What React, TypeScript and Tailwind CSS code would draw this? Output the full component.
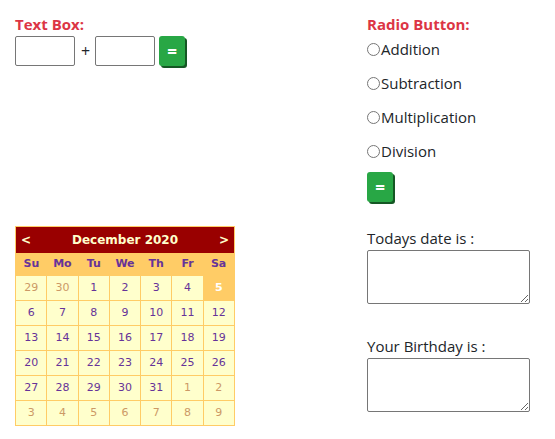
import React from 'react';

const weeks: { d: number; other?: boolean; today?: boolean }[][] = [
  [{ d: 29, other: true }, { d: 30, other: true }, { d: 1 }, { d: 2 }, { d: 3 }, { d: 4 }, { d: 5, today: true }],
  [{ d: 6 }, { d: 7 }, { d: 8 }, { d: 9 }, { d: 10 }, { d: 11 }, { d: 12 }],
  [{ d: 13 }, { d: 14 }, { d: 15 }, { d: 16 }, { d: 17 }, { d: 18 }, { d: 19 }],
  [{ d: 20 }, { d: 21 }, { d: 22 }, { d: 23 }, { d: 24 }, { d: 25 }, { d: 26 }],
  [{ d: 27 }, { d: 28 }, { d: 29 }, { d: 30 }, { d: 31 }, { d: 1, other: true }, { d: 2, other: true }],
  [3, 4, 5, 6, 7, 8, 9].map(d => ({ d, other: true })),
];

const dayNames = ['Su', 'Mo', 'Tu', 'We', 'Th', 'Fr', 'Sa'];

function EqualsButton() {
  return (
    <button className="w-[26px] h-[30px] rounded-[3px] bg-[#28a745] text-white font-bold text-[17px] leading-none shadow-[2px_2px_0_#155724] flex items-center justify-center">
      =
    </button>
  );
}

function Calendar() {
  return (
    <table className="w-[220px] border-collapse border border-[#ffcc66] bg-[#ffffcc] text-[#663399] font-['DejaVu_Sans',Verdana,sans-serif] text-[11px]">
      <tbody>
        <tr className="bg-[#990000] text-[#ffffcc] font-bold h-[26px]">
          <td colSpan={7} className="p-0">
            <div className="flex items-center justify-between px-[5px]">
              <span className="text-[12px]">&lt;</span>
              <span className="text-[12px]">December 2020</span>
              <span className="text-[12px]">&gt;</span>
            </div>
          </td>
        </tr>
        <tr className="bg-[#ffcc66] font-bold h-[23px]">
          {dayNames.map(n => (
            <td key={n} className="text-center p-0">{n}</td>
          ))}
        </tr>
        {weeks.map((w, i) => (
          <tr key={i} className="h-[25px]">
            {w.map((c, j) => (
              <td
                key={j}
                className={`w-[31px] text-center p-0 border border-[#ffcc66] ${
                  c.today ? 'bg-[#ffcc66] text-white font-bold' : c.other ? 'text-[#cc9966]' : ''
                }`}
              >
                {c.d}
              </td>
            ))}
          </tr>
        ))}
      </tbody>
    </table>
  );
}

export default function App() {
  return (
    <div className="flex font-['Open_Sans','Noto_Sans',sans-serif] text-[#212529] pt-[13px] pl-[15px]">
      <div className="w-[352px]">
        <h2 className="text-[15px] font-bold text-[#dc3545] h-[23px] leading-[22px]">Text Box:</h2>
        <div className="flex items-center">
          <input className="w-[60px] h-[30px] border border-[#767676] rounded-[2px]" />
          <span className="ml-[6px] mr-[5px] text-[16px]">+</span>
          <input className="w-[60px] h-[30px] border border-[#767676] rounded-[2px]" />
          <div className="ml-[4px]">
            <EqualsButton />
          </div>
        </div>
        <div className="mt-[160px]">
          <Calendar />
        </div>
      </div>
      <div className="flex flex-col">
        <h2 className="text-[15px] font-bold text-[#dc3545] h-[19px] leading-[22px]">Radio Button:</h2>
        {['Addition', 'Subtraction', 'Multiplication', 'Division'].map(l => (
          <label key={l} className="h-[34px] flex items-center text-[15px]">
            <input type="radio" name="op" className="w-[13px] h-[13px] m-0 mr-[1px]" />
            {l}
          </label>
        ))}
        <div className="mt-[4px]">
          <EqualsButton />
        </div>
        <div className="mt-[24px] text-[15px] h-[24px] leading-[24px]">Todays date is :</div>
        <textarea className="w-[163px] h-[54px] border border-[#767676] rounded-[2px]" />
        <div className="mt-[30px] text-[15px] h-[24px] leading-[24px]">Your Birthday is :</div>
        <textarea className="w-[163px] h-[54px] border border-[#767676] rounded-[2px]" />
      </div>
    </div>
  );
}
